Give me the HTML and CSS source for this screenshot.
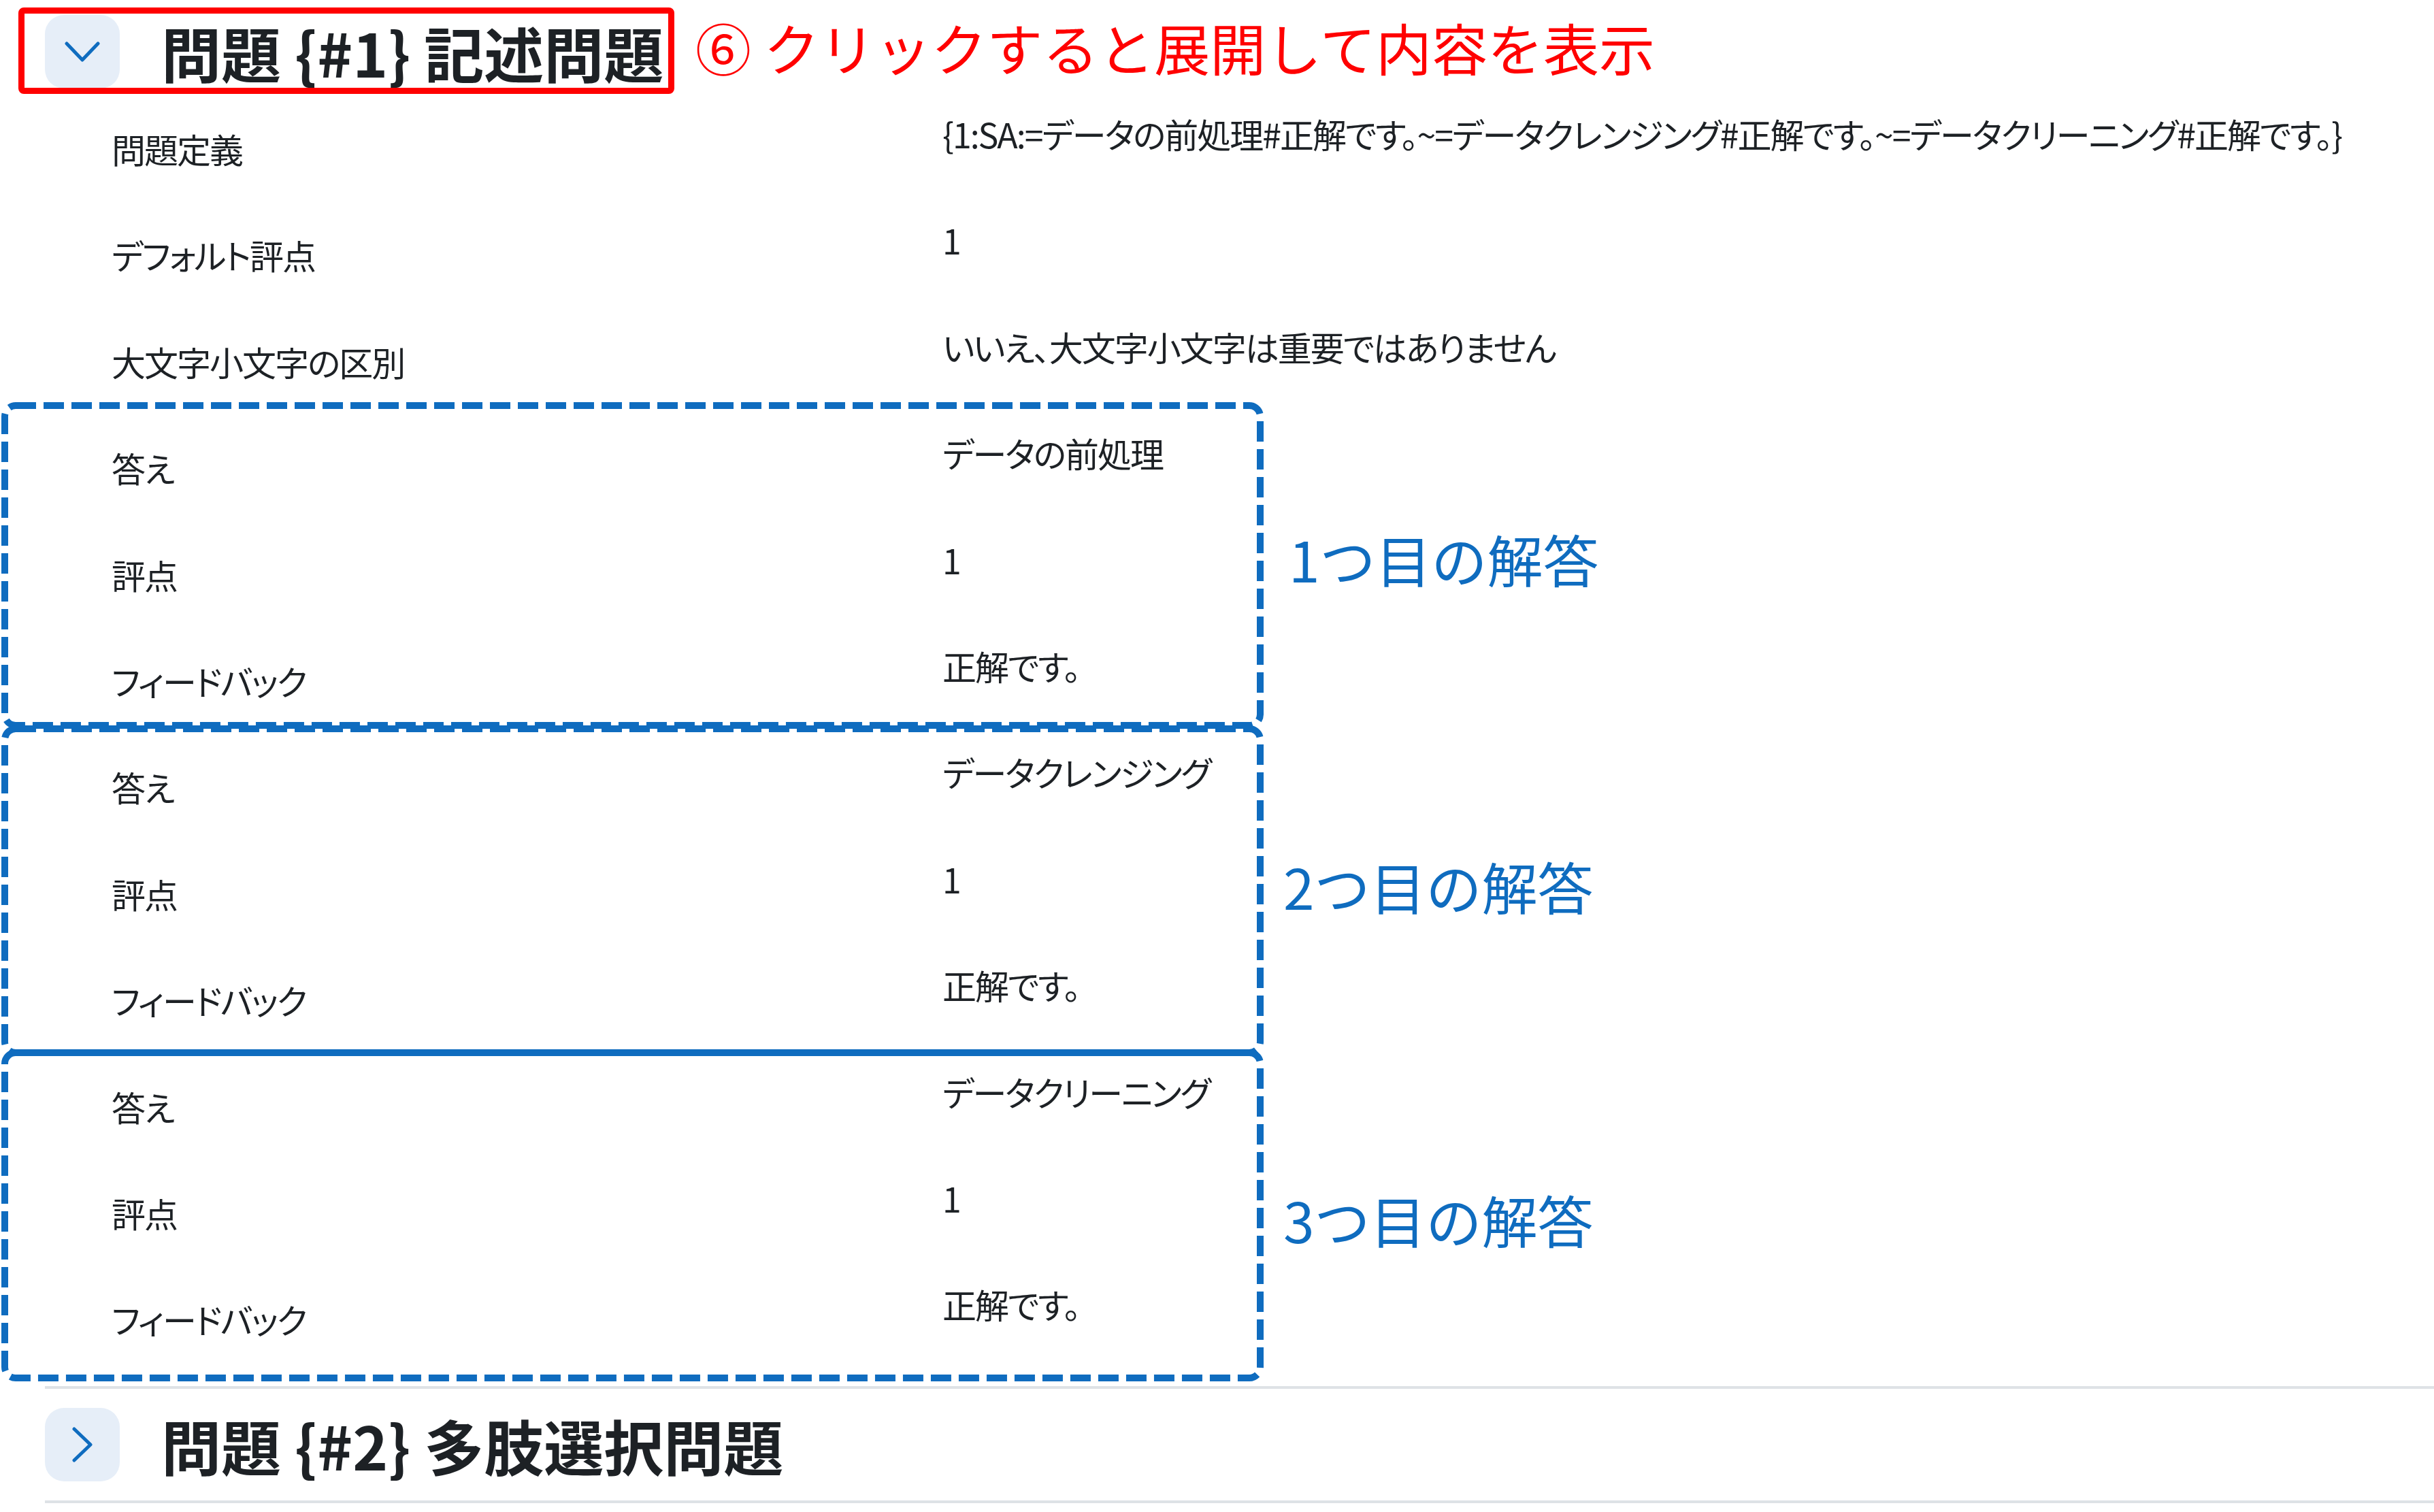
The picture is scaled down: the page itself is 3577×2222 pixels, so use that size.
FILE: index.html
```html
<!DOCTYPE html>
<html lang="ja">
<head>
    <meta charset="UTF-8">
    <meta name="viewport" content="width=device-width, initial-scale=1.0">
    <title>問題プレビュー</title>
    <link rel="stylesheet" href="styles.css">
</head>
<body>
    <div class="qbank">
        <!-- 問題 1 : 展開済み -->
        <section class="question question-open">
            <div class="q-head">
                <button class="toggle" type="button" aria-expanded="true">
                    <svg class="chev-down" viewBox="0 0 52 30"><path d="M3 3 L26 27 L49 3"/></svg>
                </button>
                <h2 class="q-title">問題 {#1} 記述問題</h2>
                <div class="callout-frame"></div>
                <span class="callout-text">⑥ クリックすると展開して内容を表示</span>
            </div>

            <div class="props">
                <div class="prop">
                    <div class="prop-label">問題定義</div>
                    <div class="prop-value">{1:SA:=データの前処理#正解です。~=データクレンジング#正解です。~=データクリーニング#正解です。}</div>
                </div>
                <div class="prop">
                    <div class="prop-label">デフォルト評点</div>
                    <div class="prop-value">1</div>
                </div>
                <div class="prop">
                    <div class="prop-label">大文字小文字の区別</div>
                    <div class="prop-value">いいえ、大文字小文字は重要ではありません</div>
                </div>

                <div class="answer-group ag-1">
                    <div class="prop">
                        <div class="prop-label">答え</div>
                        <div class="prop-value">データの前処理</div>
                    </div>
                    <div class="prop">
                        <div class="prop-label">評点</div>
                        <div class="prop-value">1</div>
                    </div>
                    <div class="prop">
                        <div class="prop-label">フィードバック</div>
                        <div class="prop-value">正解です。</div>
                    </div>
                    <svg class="ag-frame"><rect x="0" y="0" width="100%" height="100%" rx="16"/></svg>
                    <span class="ag-note">1つ目の解答</span>
                </div>

                <div class="answer-group ag-2">
                    <div class="prop">
                        <div class="prop-label">答え</div>
                        <div class="prop-value">データクレンジング</div>
                    </div>
                    <div class="prop">
                        <div class="prop-label">評点</div>
                        <div class="prop-value">1</div>
                    </div>
                    <div class="prop">
                        <div class="prop-label">フィードバック</div>
                        <div class="prop-value">正解です。</div>
                    </div>
                    <svg class="ag-frame"><rect x="0" y="0" width="100%" height="100%" rx="16"/><line class="seam" x1="1%" y1="100%" x2="99%" y2="100%"/></svg>
                    <span class="ag-note">2つ目の解答</span>
                </div>

                <div class="answer-group ag-3">
                    <div class="prop">
                        <div class="prop-label">答え</div>
                        <div class="prop-value">データクリーニング</div>
                    </div>
                    <div class="prop">
                        <div class="prop-label">評点</div>
                        <div class="prop-value">1</div>
                    </div>
                    <div class="prop">
                        <div class="prop-label">フィードバック</div>
                        <div class="prop-value">正解です。</div>
                    </div>
                    <svg class="ag-frame"><rect x="0" y="0" width="100%" height="100%" rx="16"/></svg>
                    <span class="ag-note">3つ目の解答</span>
                </div>
            </div>
        </section>

        <!-- 問題 2 : 折りたたみ -->
        <section class="question">
            <div class="q-head">
                <button class="toggle" type="button" aria-expanded="false">
                    <svg class="chev-right" viewBox="0 0 30 52"><path d="M3 3 L27 26 L3 49"/></svg>
                </button>
                <h2 class="q-title">問題 {#2} 多肢選択問題</h2>
            </div>
        </section>
    </div>
</body>
</html>
```

FILE: styles.css
```css
body {
    margin: 0;
    background: #fff;
    color: #1d2125;
    font-family: "Noto Sans CJK JP", "Noto Sans", sans-serif;
}

.qbank {
    margin-top: -6px;
}

.question {
    position: relative;
    margin-left: 66px;
    border-bottom: 4px solid #dee2e6;
}
.question-open {
    padding-bottom: 2px;
}

/* ヘッダー */
.q-head {
    position: relative;
    display: flex;
    align-items: center;
    gap: 61px;
    height: 164px;
}
.toggle {
    width: 110px;
    height: 108px;
    padding: 0;
    border: 0;
    border-radius: 28px;
    background: #e6eef8;
    display: flex;
    align-items: center;
    justify-content: center;
}
.toggle svg path {
    fill: none;
    stroke: #0f6cbf;
    stroke-width: 5;
    stroke-linecap: round;
    stroke-linejoin: round;
}
.chev-down {
    width: 52px;
    height: 30px;
}
.chev-right {
    width: 30px;
    height: 52px;
}
.q-title {
    margin: 0;
    font-size: 88px;
    font-weight: 700;
    line-height: 1;
    color: #1d2125;
}

/* 赤い注釈 */
.callout-frame {
    position: absolute;
    left: -39px;
    top: 17px;
    width: 964px;
    height: 127px;
    box-sizing: border-box;
    border: 9px solid #ff0000;
    border-radius: 8px;
}
.callout-text {
    position: absolute;
    left: 956px;
    top: 34px;
    font-size: 82px;
    line-height: 1;
    color: #ff0000;
    white-space: nowrap;
}

/* 設定行 */
.prop {
    display: grid;
    grid-template-columns: 1221px 1fr;
    height: 156.4px;
    padding-left: 98px;
    font-size: 50px;
    line-height: 70px;
    letter-spacing: -2px;
    font-feature-settings: "palt";
    white-space: nowrap;
}
.prop-label {
    padding-top: 25px;
}
.prop-value {
    padding-top: 3px;
}

/* 解答グループの青い枠 */
.answer-group {
    position: relative;
}
.ag-frame {
    position: absolute;
    left: -59px;
    width: 1845px;
    overflow: visible;
}
.ag-frame rect,
.ag-frame line {
    fill: none;
    stroke: #0f6cbf;
    stroke-width: 10;
    stroke-dasharray: 30 11;
}
.ag-frame .seam {
    stroke-dasharray: none;
}
.ag-1 .ag-frame { top: -31px; height: 470px; }
.ag-2 .ag-frame { top: -25px; height: 476px; }
.ag-3 .ag-frame { top: -19px; height: 478px; }

.ag-note {
    position: absolute;
    font-size: 82px;
    line-height: 1;
    color: #0f6cbf;
    white-space: nowrap;
}
.ag-1 .ag-note { left: 1828px; top: 153px; }
.ag-2 .ag-note { left: 1820px; top: 165px; }
.ag-3 .ag-note { left: 1820px; top: 185px; }
```
